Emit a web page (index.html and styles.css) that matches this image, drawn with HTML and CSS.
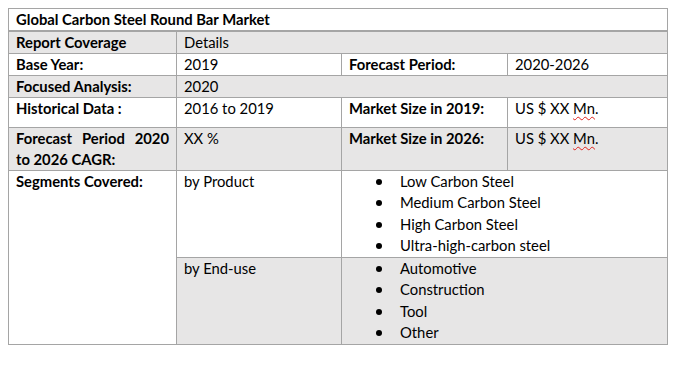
FILE: index.html
```html
<!DOCTYPE html>
<html>
<head>
<meta charset="utf-8">
<link rel="stylesheet" href="styles.css">
</head>
<body>
<table class="grid">
  <colgroup>
    <col class="c1"><col class="c2"><col class="c3"><col class="c4">
  </colgroup>
  <tr class="title-row">
    <td colspan="4" class="b">Global Carbon Steel Round Bar Market</td>
  </tr>
  <tr class="shade">
    <td class="b">Report Coverage</td>
    <td colspan="3">Details</td>
  </tr>
  <tr>
    <td class="b">Base Year:</td>
    <td>2019</td>
    <td class="b">Forecast Period:</td>
    <td>2020-2026</td>
  </tr>
  <tr class="shade">
    <td class="b">Focused Analysis:</td>
    <td colspan="3">2020</td>
  </tr>
  <tr class="tall">
    <td class="b">Historical Data :</td>
    <td>2016 to 2019</td>
    <td class="b">Market Size in 2019:</td>
    <td>US $ XX <span class="spell">Mn</span>.</td>
  </tr>
  <tr class="shade">
    <td class="b"><span class="just">Forecast Period 2020</span>to 2026 CAGR:</td>
    <td>XX %</td>
    <td class="b">Market Size in 2026:</td>
    <td>US $ XX <span class="spell">Mn</span>.</td>
  </tr>
  <tr class="list-row">
    <td class="b plain" rowspan="2">Segments Covered:</td>
    <td>by Product</td>
    <td colspan="2">
      <ul class="bullets">
        <li>Low Carbon Steel</li>
        <li>Medium Carbon Steel</li>
        <li>High Carbon Steel</li>
        <li>Ultra-high-carbon steel</li>
      </ul>
    </td>
  </tr>
  <tr class="shade list-row">
    <td>by End-use</td>
    <td colspan="2">
      <ul class="bullets">
        <li>Automotive</li>
        <li>Construction</li>
        <li>Tool</li>
        <li>Other</li>
      </ul>
    </td>
  </tr>
</table>
</body>
</html>
```

FILE: styles.css
```css
html, body {
  margin: 0;
  padding: 0;
  background: #ffffff;
}
body {
  padding: 8px;
  font-family: Lato, "Open Sans", "Liberation Sans", sans-serif;
  font-size: 14.8px;
  color: #000;
}
.grid {
  border-collapse: collapse;
  table-layout: fixed;
  width: 659px;
}
.c1 { width: 168px; }
.c2 { width: 165px; }
.c3 { width: 166px; }
.c4 { width: 160px; }
.grid td {
  border: 1px solid #a5a5a5;
  padding: 0 7px;
  line-height: 21px;
  vertical-align: top;
  background: #ffffff;
}
.grid tr.shade td {
  background: #e7e6e6;
}
.grid tr.shade td.plain {
  background: #ffffff;
}
.grid tr.title-row td {
  border-bottom: 2px solid #a5a5a5;
}
.b {
  font-weight: 700;
}
.grid tr.tall td {
  padding-bottom: 8px;
}
.just {
  display: block;
  text-align: justify;
  text-align-last: justify;
}
.spell {
  text-decoration: underline wavy #e0201b;
  text-decoration-thickness: 1px;
  text-underline-offset: 2px;
}
.grid tr.list-row td {
  padding-bottom: 1px;
}
.bullets {
  list-style: none;
  margin: 0;
  padding: 0 0 0 51px;
}
.bullets li {
  position: relative;
  line-height: 21.3px;
}
.bullets li::before {
  content: "";
  position: absolute;
  left: -24px;
  top: 8px;
  width: 6px;
  height: 6px;
  border-radius: 50%;
  background: #000;
}
```
